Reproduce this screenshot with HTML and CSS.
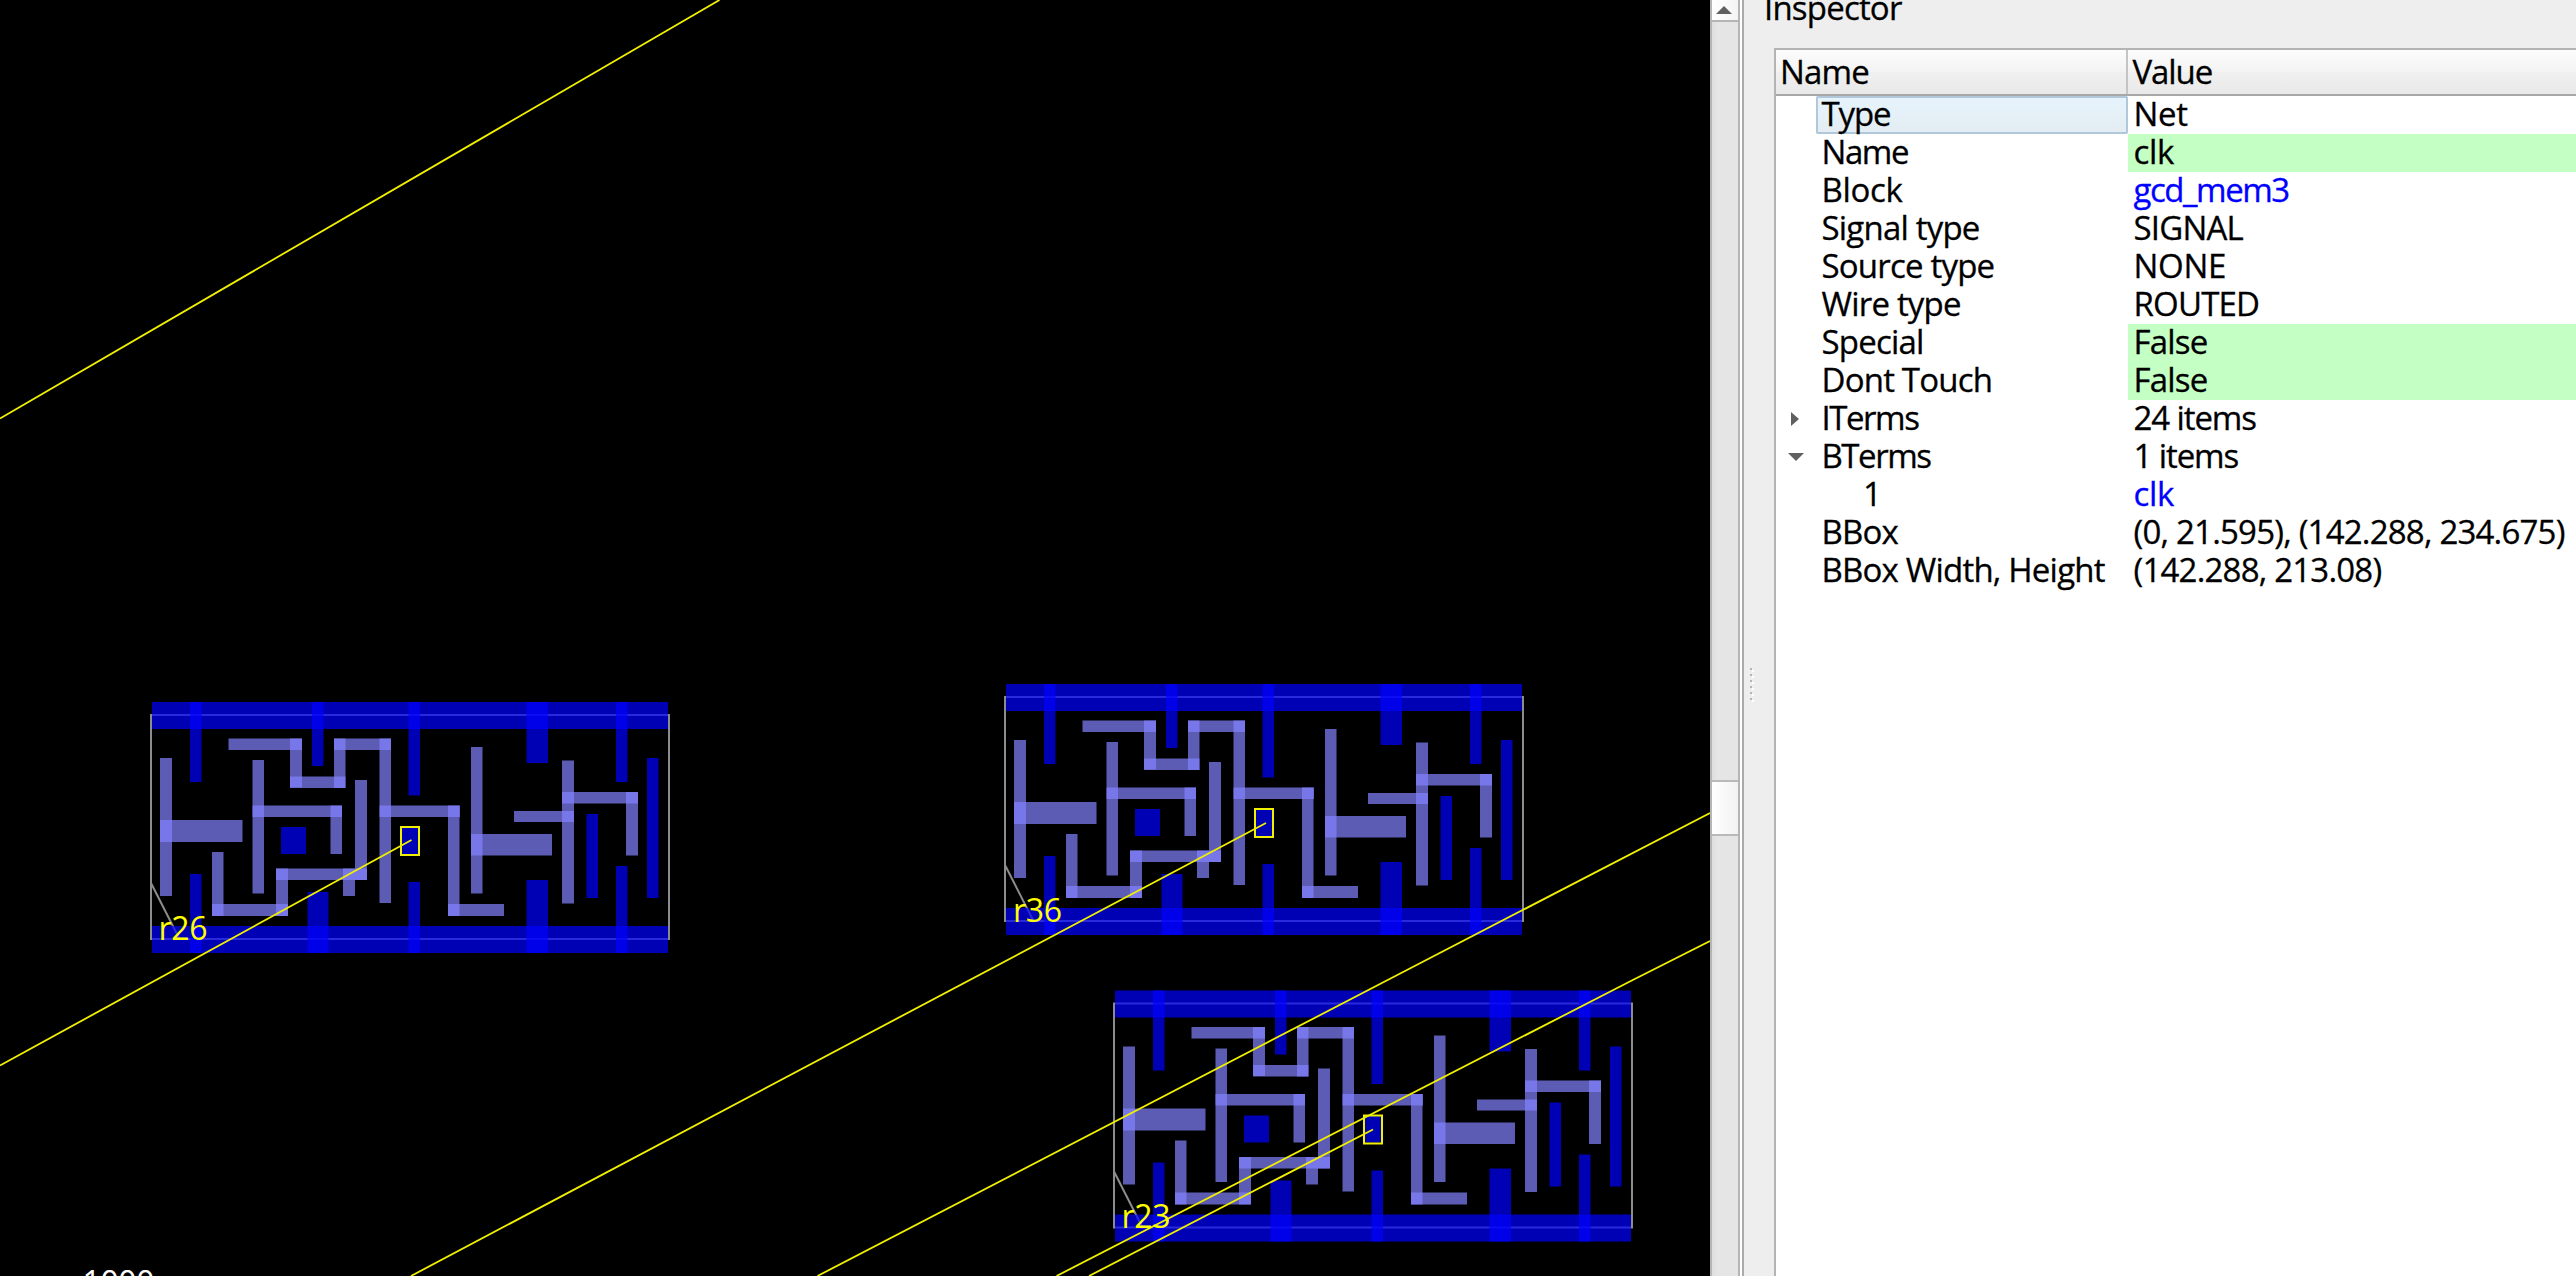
FILE: index.html
```html
<!DOCTYPE html>
<html lang="en">
<head>
<meta charset="utf-8">
<title>Inspector</title>
<link rel="stylesheet" href="styles.css">
</head>
<body>
<main class="window">
  <svg class="layout-view" width="1710" height="1276" viewBox="0 0 1710 1276" role="img" aria-label="Layout">
    <defs>
      <g id="cell">
        <g class="outline">
          <rect x="151" y="715" width="518" height="224"/>
          <path d="M151 883L180 940"/>
        </g>
        <g class="metal">
          <rect x="152" y="702" width="516" height="27"/>
          <rect x="152" y="926" width="516" height="27"/>
          <rect x="190" y="702" width="11.5" height="80"/>
          <rect x="190" y="874" width="11.5" height="79"/>
          <rect x="312" y="702" width="11.5" height="64"/>
          <rect x="307.5" y="892" width="21" height="61"/>
          <rect x="408.5" y="702" width="11.5" height="93.5"/>
          <rect x="408.5" y="882" width="11.5" height="71"/>
          <rect x="526.5" y="702" width="21.5" height="61"/>
          <rect x="526.5" y="880" width="21.5" height="73"/>
          <rect x="616" y="702" width="11.5" height="80"/>
          <rect x="616" y="866" width="11.5" height="87"/>
          <rect x="647" y="758" width="11.5" height="140"/>
          <rect x="586.5" y="814" width="11.5" height="84"/>
          <rect x="281" y="827" width="25" height="27"/>
          <rect x="401" y="827" width="18" height="27"/>
        </g>
        <g class="pin-metal">
          <rect x="160" y="758" width="12" height="138"/>
          <rect x="160" y="820" width="82.5" height="22"/>
          <rect x="212" y="852" width="11.5" height="64"/>
          <rect x="212" y="904" width="76" height="12"/>
          <rect x="276" y="868.5" width="12" height="47.5"/>
          <rect x="276" y="868.5" width="91" height="11.5"/>
          <rect x="355" y="780" width="12" height="100"/>
          <rect x="343" y="868.5" width="12" height="27.5"/>
          <rect x="252.5" y="760" width="11.5" height="133.5"/>
          <rect x="252.5" y="805.5" width="89.5" height="11.5"/>
          <rect x="330.5" y="805.5" width="11.5" height="48.5"/>
          <rect x="228.5" y="738.5" width="73.5" height="11.5"/>
          <rect x="290" y="738.5" width="12" height="49"/>
          <rect x="290" y="776.5" width="55.5" height="11.5"/>
          <rect x="334" y="738.5" width="11.5" height="49.5"/>
          <rect x="334" y="738.5" width="57" height="11.5"/>
          <rect x="379.5" y="738.5" width="11.5" height="164.5"/>
          <rect x="379.5" y="805.5" width="80.5" height="11.5"/>
          <rect x="448" y="805.5" width="11.5" height="110.5"/>
          <rect x="448" y="904" width="56" height="12"/>
          <rect x="471" y="747" width="11.5" height="146.5"/>
          <rect x="471" y="834" width="81" height="21.5"/>
          <rect x="562" y="760.5" width="12" height="143"/>
          <rect x="514" y="811" width="60" height="11"/>
          <rect x="562" y="792" width="76" height="11.5"/>
          <rect x="626" y="792" width="12" height="63.5"/>
        </g>
        <rect class="pin" x="401" y="827" width="18" height="28"/>
      </g>
    </defs>
    <use href="#cell"/>
    <use href="#cell" x="854" y="-18"/>
    <use href="#cell" x="963" y="288.5"/>
    <path class="flight" d="M0 418.5L719.5 0M0 1065.5L411.5 840M411 1276L1266 823M817.5 1276L1386.7 980.5L1710 813M1056.5 1276L1631.8 980.5L1710 941M1089 1276L1373 1129.5"/>
    <g class="label">
      <text x="158.5" y="940" textLength="49">r26</text>
      <text x="1013" y="922" textLength="49">r36</text>
      <text x="1121.5" y="1228" textLength="49">r23</text>
    </g>
    <text class="scale" x="82.5" y="1294" textLength="72">1000</text>
  </svg>

  <div class="scrollbar">
    <div class="scroll-up"><svg width="16" height="8" viewBox="0 0 16 8"><path d="M8 0L16 8H0z"/></svg></div>
    <div class="scroll-thumb"></div>
  </div>

  <div class="splitter"><i></i><i></i><i></i><i></i><i></i><i></i></div>

  <section class="inspector">
    <h1 class="title">Inspector</h1>
    <div class="tree">
      <div class="head"><div class="name">Name</div><div class="value snug">Value</div></div>
      <div class="row"><div class="name selected snug">Type</div><div class="value loose">Net</div></div>
      <div class="row"><div class="name tight">Name</div><div class="value editable loose">clk</div></div>
      <div class="row"><div class="name loose">Block</div><div class="value link tight">gcd_mem3</div></div>
      <div class="row"><div class="name">Signal type</div><div class="value">SIGNAL</div></div>
      <div class="row"><div class="name">Source type</div><div class="value loose">NONE</div></div>
      <div class="row"><div class="name">Wire type</div><div class="value">ROUTED</div></div>
      <div class="row"><div class="name">Special</div><div class="value editable">False</div></div>
      <div class="row"><div class="name">Dont Touch</div><div class="value editable">False</div></div>
      <div class="row"><svg class="arrow" width="16" height="14" viewBox="0 0 16 14"><path d="M3 0L11 7L3 14z"/></svg><div class="name tight">ITerms</div><div class="value snug">24 items</div></div>
      <div class="row"><svg class="arrow" width="16" height="14" viewBox="0 0 16 14"><path d="M0 3H16L8 11z"/></svg><div class="name tight">BTerms</div><div class="value snug">1 items</div></div>
      <div class="row"><div class="name child">1</div><div class="value link loose">clk</div></div>
      <div class="row"><div class="name">BBox</div><div class="value">(0, 21.595), (142.288, 234.675)</div></div>
      <div class="row"><div class="name">BBox Width, Height</div><div class="value">(142.288, 213.08)</div></div>
    </div>
  </section>
</main>
</body>
</html>
```
FILE: styles.css
```css
* { box-sizing: border-box; }

body {
  margin: 0;
  overflow: hidden;
  background: #eee;
  color: #000;
  font: 33px/38px "Open Sans", "Noto Sans", sans-serif;
  letter-spacing: -0.8px;
  -webkit-text-stroke: 0.3px;
}

.window { display: flex; width: 2576px; height: 1276px; overflow: hidden; }

/* Layout canvas */
.layout-view { display: block; flex: none; background: #000; -webkit-text-stroke: 0; }
.outline { fill: none; stroke: #8c8c8c; stroke-width: 2; }
.metal { fill: rgba(0, 0, 255, 0.706); }
.pin-metal { fill: rgba(130, 130, 255, 0.706); }
.pin { fill: none; stroke: #f0f000; stroke-width: 2; }
.flight { fill: none; stroke: #f0f000; stroke-width: 1.8; }
.label { fill: #ff0; font-size: 32px; letter-spacing: 0; }
.scale { fill: #fff; font-size: 32px; letter-spacing: 0; }

/* Vertical scroll bar */
.scrollbar {
  flex: none;
  width: 30px;
  border: solid #b5b5b5;
  border-width: 0 2px;
  background: linear-gradient(90deg, #dedede, #e5e5e5 20%, #e5e5e5);
}
.scroll-up {
  height: 22px;
  padding: 2px 4px 0;
  border-bottom: 2px solid #b5b5b5;
  background: linear-gradient(90deg, #fff, #f4f4f4);
  line-height: 0;
}
.scroll-up path, .arrow path { fill: #606060; }
.scroll-thumb {
  height: 56px;
  margin-top: 758px;
  border: solid #b9b9b9;
  border-width: 2px 0;
  background: linear-gradient(90deg, #fff, #f2f2f2);
}

/* Dock splitter */
.splitter {
  display: flex;
  flex: none;
  flex-direction: column;
  gap: 4px;
  width: 34px;
  padding: 668px 0 0 8px;
  border-left: 2px solid #fff;
  box-shadow: inset 2px 0 #aaa;
}
.splitter i { width: 2px; height: 2px; background: #b5b5b5; box-shadow: 2px 2px #fff; }

/* Inspector dock */
.inspector { display: flex; flex: 1; flex-direction: column; min-width: 0; }
.title {
  height: 48px;
  margin: -11px 0 11px -10px;
  font: inherit;
}
.tree { flex: 1; border: solid #b4b4b4; border-width: 2px 0 0 2px; background: #fff; }
.head {
  display: grid;
  grid-template-columns: 352px 1fr;
  height: 46px;
  border-bottom: 2px solid #a8a8a8;
  background: linear-gradient(#fcfcfc, #f3f3f3 50%, #f0f0f0 50%, #e9e9e9);
  line-height: 44px;
}
.head .name { padding-left: 4px; border-right: 2px solid #c4c4c4; }
.row {
  display: grid;
  grid-template-columns: 12px 28px 312px 1fr;
  height: 38px;
  line-height: 36px;
  white-space: pre;
}
.arrow { grid-area: 1 / 2; align-self: center; }
.row .name { grid-area: 1 / 3; padding-left: 5.5px; }
.row .value { grid-area: 1 / 4; padding-left: 5.5px; }
.value { padding-left: 4.5px; }
.row .selected {
  background: linear-gradient(#e7f4fd, #e3ecf2);
  border-radius: 2px;
  box-shadow: inset 0 0 0 2px #b0c8da;
}
.row .child { padding-left: 47px; }
.editable { background: #c4ffc4; }
.link { color: #00f; }
.tight { letter-spacing: -1.45px; }
.snug { letter-spacing: -1.1px; }
.loose { letter-spacing: -0.3px; }
```
